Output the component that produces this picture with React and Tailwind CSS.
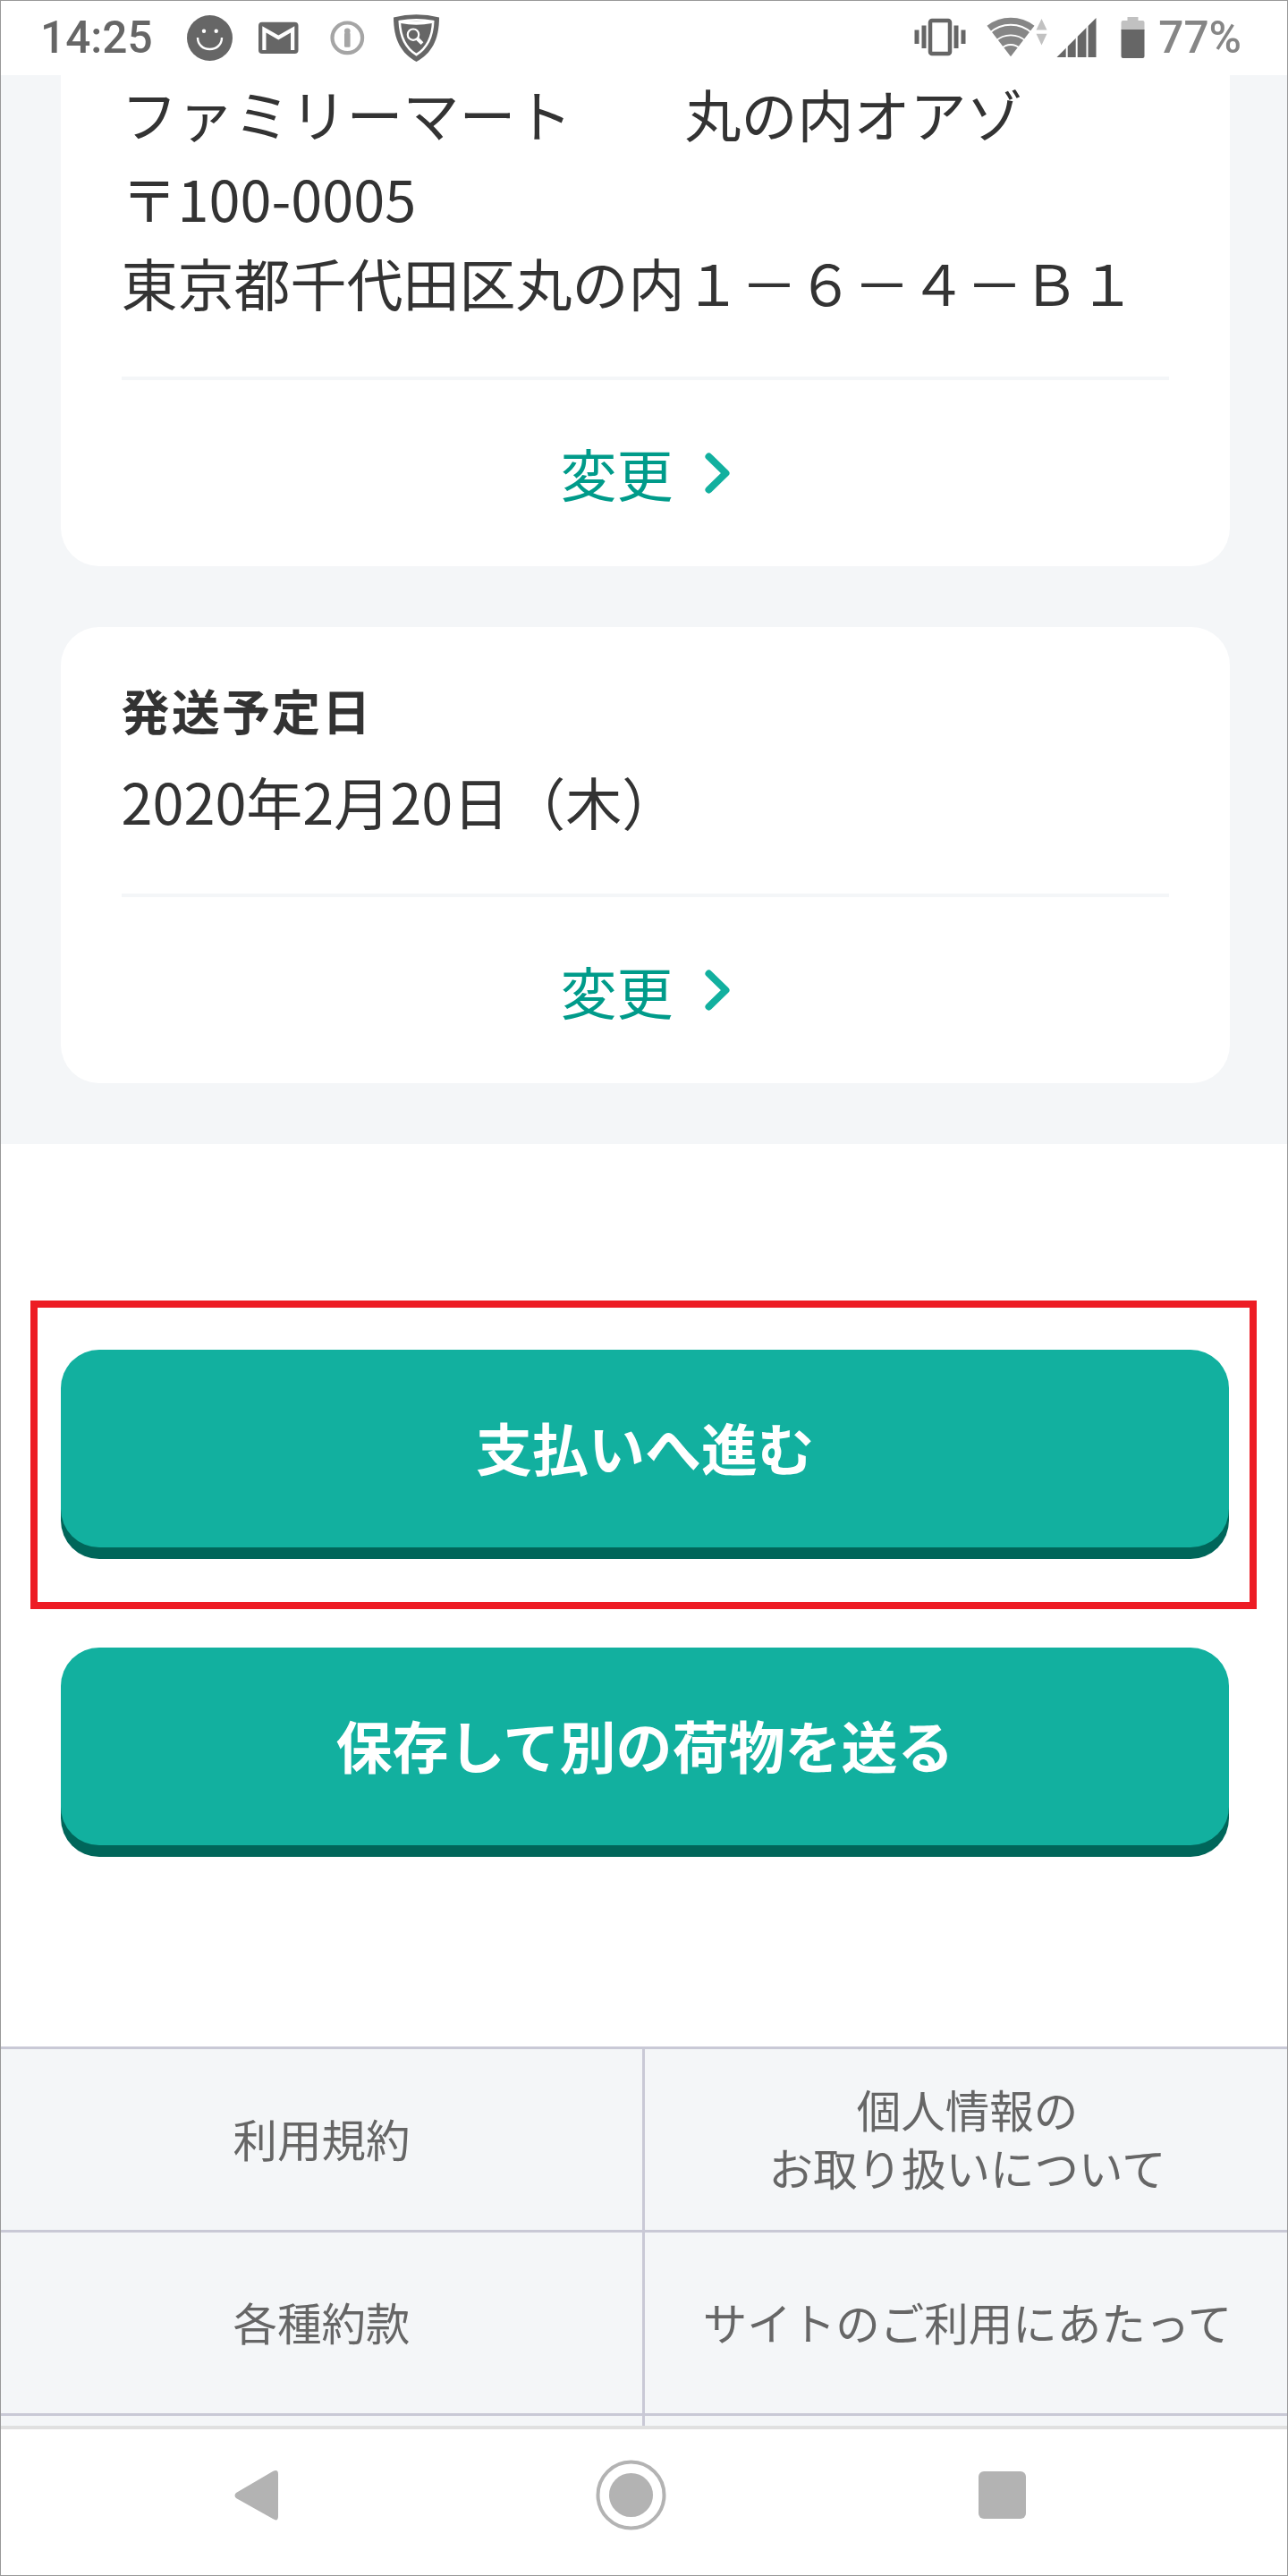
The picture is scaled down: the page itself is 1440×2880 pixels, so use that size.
const addressLines = [
  "ファミリーマート\u3000\u3000丸の内オアゾ",
  "〒100-0005",
  "東京都千代田区丸の内１－６－４－Ｂ１",
]

const footerLinks = [
  ["利用規約"],
  ["個人情報の", "お取り扱いについて"],
  ["各種約款"],
  ["サイトのご利用にあたって"],
]

function StatusBar() {
  return (
    <header className="flex h-[83px] shrink-0 items-center bg-white pl-[45px] pr-[51px] font-['Roboto',sans-serif] text-[49.5px] font-medium leading-none">
      <span className="w-[163px] text-[#666]"><span className="-ml-px">14:25</span></span>

      <svg className="h-[83px] w-[51px]" viewBox="209 1 51 83" fill="none">
        <circle cx="234.5" cy="42.5" r="25.5" fill="#666" />
        <circle cx="228" cy="34.7" r="2.2" fill="#fff" />
        <circle cx="241.7" cy="34.7" r="2.2" fill="#fff" />
        <path d="M221 42c0 8 6 13 13.500 13s13.500-5 13.500-13" stroke="#fff" strokeWidth="2.400" />
      </svg>

      <svg className="ml-[29px] h-[83px] w-[45px]" viewBox="289 1 45 83">
        <rect x="289" y="24.700" width="44.500" height="35.300" rx="4" fill="#666" />
        <path d="M293.300 56V29.200L311.300 39.400L329.300 29.200V56H325V36.500L311.300 44.500L297.500 36.500V56Z" fill="#fff" />
      </svg>

      <svg className="ml-[35px] h-[83px] w-[39px]" viewBox="369 1 39 83" fill="none">
        <circle cx="388.300" cy="42.300" r="16.800" stroke="#a5a5a5" strokeWidth="4.200" />
        <circle cx="388.300" cy="34.700" r="3.300" fill="#a5a5a5" />
        <rect x="385" y="36.500" width="6.600" height="16.300" rx="1.500" fill="#a5a5a5" />
      </svg>

      <svg className="ml-[31px] h-[83px] w-[52px]" viewBox="439 1 52 83" fill="none">
        <path d="M440 19.500Q465.500 12.800 491 19.500C491 45 482 60 465.500 69C449 60 440 45 440 19.500Z" fill="#666" />
        <path d="M446.800 24Q465.500 20.500 484.200 24C483.500 43 477 54 465.500 61.200C454 54 447.500 43 446.800 24Z" stroke="#fff" strokeWidth="2.600" />
        <path d="M448 26Q465.500 29.500 483 26L483.500 23.500H447.500Z" fill="#fff" />
        <circle cx="462" cy="38.700" r="6.200" stroke="#fff" strokeWidth="2.200" />
        <path d="M466.300 43L472 48.600" stroke="#fff" strokeWidth="4" />
      </svg>

      <svg className="ml-auto h-[83px] w-[58px]" viewBox="1022.500 1 58 83" fill="#666">
        <rect x="1040.500" y="23" width="22" height="37" rx="2" fill="none" stroke="#666" strokeWidth="4.500" />
        <rect x="1023" y="33.500" width="5" height="15.500" />
        <rect x="1031" y="28.500" width="5" height="25.500" />
        <rect x="1067" y="28.500" width="5" height="25.500" />
        <rect x="1075" y="33.500" width="5" height="15.500" />
      </svg>

      <svg className="ml-[23px] h-[83px] w-[68px]" viewBox="1103.500 1 68 83" fill="none">
        <path d="M1130.500 63.300L1104 28.700A43.500 43.500 0 0 1 1157 28.700Z" fill="#868686" />
        <g stroke="#fff" strokeWidth="1.900">
          <path d="M1107 36.800A35 35 0 0 1 1154 36.800" />
          <path d="M1113.500 46A25 25 0 0 1 1147.500 46" />
          <path d="M1120 54.500A14.500 14.500 0 0 1 1141 54.500" />
        </g>
        <path d="M1165 21L1171 33.500H1159ZM1159 37.700H1171L1165 50.500Z" fill="#c1c1c1" />
      </svg>

      <svg className="ml-[10px] h-[83px] w-[45px]" viewBox="1181.500 1 45 83">
        <path d="M1182 64L1226 20V64Z" fill="#666" />
        <path d="M1193.200 20V64M1204.200 20V64M1216 20V64" stroke="#fff" strokeWidth="2" />
      </svg>

      <svg className="ml-[27px] h-[83px] w-[27px]" viewBox="1253.500 1 27 83">
        <path d="M1261 19H1273V23H1278Q1280 23 1280 25V34H1254V25Q1254 23 1256 23H1261Z" fill="#c1c1c1" />
        <path d="M1254 33H1280V63Q1280 65 1278 65H1256Q1254 65 1254 63Z" fill="#666" />
      </svg>

      <span className="ml-[15px] text-[#868686]">77%</span>
    </header>
  )
}

function ChangeLink() {
  return (
    <a className="flex h-[212px] items-center justify-center gap-[35px] border-t-[4px] border-[#f4f6f8] text-[#009b8a]">
      変更
      <svg className="h-[46px] w-[28px]" viewBox="0 0 28 46" fill="none">
        <path d="M4.500 4.500L23.500 23L4.500 41.500" stroke="#12b09f" strokeWidth="8" strokeLinecap="round" strokeLinejoin="round" />
      </svg>
    </a>
  )
}

function PrimaryButton({ children }) {
  return (
    <button className="block h-[221px] w-[1306px] rounded-[43px] bg-[#12b09f] pb-[4px] text-center font-bold text-white shadow-[0_13px_0_#00665a]">
      {children}
    </button>
  )
}

function App() {
  return (
    <div className="flex h-[2880px] w-[1440px] flex-col overflow-hidden border border-[#999] bg-white font-['Noto_Sans_CJK_JP',sans-serif] text-[63px] leading-[94.5px] text-[#333]">
      <StatusBar />

      <main className="flex h-[2204px] shrink-0 flex-col">
        <section className="h-[1195px] shrink-0 bg-[#f4f6f8] pl-[66.5px] pr-[64.5px]">
          <div className="rounded-b-[43px] bg-white px-[68px]">
            {/* the first line sits tight under the status bar */}
            <div className="whitespace-pre pb-[58px]">
              {addressLines.map((line) => (
                <p key={line} className="first:-mt-[5px]">{line}</p>
              ))}
            </div>
            <ChangeLink />
          </div>

          <div className="mt-[68px] rounded-[43px] bg-white px-[68px] pt-[53px]">
            <h2 className="text-[54px] font-bold leading-[80px] tracking-[2.2px]">発送予定日</h2>
            <p className="mt-[14px] pb-[57px]">2020年2月20日（木）</p>
            <ChangeLink />
          </div>
        </section>

        <div className="ml-[33px] mt-[175px] h-[345px] w-[1371px] border-[8px] border-[#ed1c24] pl-[26px] pt-[47px]">
          <PrimaryButton>支払いへ進む</PrimaryButton>
        </div>
        <div className="ml-[67px] mt-[43px]">
          <PrimaryButton>保存して別の荷物を送る</PrimaryButton>
        </div>
      </main>

      <footer className="grid h-[424px] shrink-0 auto-rows-[205px] grid-cols-[720px_1fr] overflow-hidden bg-[#f4f6f8] text-center text-[49.5px] leading-[65px] text-[#666]">
        {footerLinks.map((lines) => (
          <a key={lines[0]} className="flex flex-col justify-center border-t-[3px] border-[#c9c9d6] pb-[4px] odd:border-r-[3px] even:pl-[3px]">
            {lines.map((line) => (
              <span key={line}>{line}</span>
            ))}
          </a>
        ))}
        <div className="border-r-[3px] border-t-[3px] border-[#c9c9d6]" />
        <div className="border-t-[3px] border-[#c9c9d6]" />
      </footer>

      <nav className="flex grow items-center border-t-[4px] border-[#e0e0e0] bg-white pl-[261px]">
        <svg className="-mt-[15px] h-[58px] w-[50px]" viewBox="0 0 50 58">
          <path d="M2 26L43 2Q49 -1 49 5V52Q49 59 43 55L2 32Q-1 29 2 26Z" fill="#b3b3b3" />
        </svg>
        <svg className="-mt-[17px] ml-[354px] h-[79px] w-[79px]" viewBox="0 0 79 79" fill="none">
          <circle cx="39.500" cy="39.500" r="37" stroke="#b3b3b3" strokeWidth="4" />
          <circle cx="39.500" cy="39.500" r="24.500" fill="#b3b3b3" />
        </svg>
        <div className="-mt-[16px] ml-[349px] h-[53px] w-[53px] rounded-[6px] bg-[#b3b3b3]" />
      </nav>
    </div>
  )
}

export default App
